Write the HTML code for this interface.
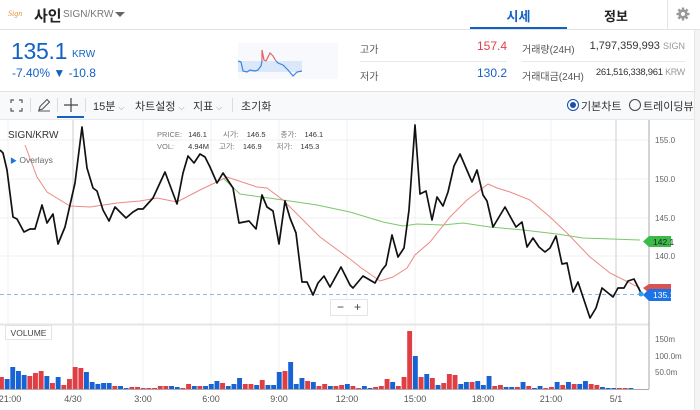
<!DOCTYPE html>
<html><head><meta charset="utf-8">
<style>
*{margin:0;padding:0;box-sizing:border-box}
body{width:700px;height:410px;overflow:hidden;background:#fff;font-family:"Liberation Sans","Noto Sans CJK KR",sans-serif;color:#333;position:relative}
.a{position:absolute;white-space:nowrap}
</style></head><body>
<!-- header -->
<div class="a" style="left:8px;top:9px;font:italic 8px 'Liberation Serif',serif;color:#e89040">Sign</div>
<div class="a" style="left:34px;top:5px;font-size:15px;font-weight:bold;color:#222">사인</div>
<div class="a" style="left:63px;top:9px;font-size:10px;color:#777">SIGN/KRW</div>
<div class="a" style="left:115px;top:12px;width:0;height:0;border-left:5px solid transparent;border-right:5px solid transparent;border-top:5px solid #666"></div>
<div class="a" style="left:470px;top:6px;width:97px;text-align:center;font-size:13px;font-weight:bold;color:#1261c4">시세</div>
<div class="a" style="left:470px;top:27px;width:97px;height:2px;background:#1261c4"></div>
<div class="a" style="left:567px;top:6px;width:98px;text-align:center;font-size:13px;font-weight:bold;color:#222">정보</div>
<div class="a" style="left:667px;top:0;width:1px;height:29px;background:#e5e5e5"></div>
<svg class="a" style="left:676px;top:7px" width="14" height="14" viewBox="0 0 14 14"><g fill="#999"><circle cx="7" cy="7" r="4.6"/><rect x="5.8" y="0.5" width="2.4" height="13"/><rect x="0.5" y="5.8" width="13" height="2.4"/><rect x="5.8" y="0.5" width="2.4" height="13" transform="rotate(45 7 7)"/><rect x="5.8" y="0.5" width="2.4" height="13" transform="rotate(-45 7 7)"/></g><circle cx="7" cy="7" r="2" fill="#fff"/></svg>
<div class="a" style="left:0;top:29px;width:700px;height:1px;background:#e2e2e2"></div>
<!-- price -->
<div class="a" style="left:11px;top:38px;font-size:23px;color:#1261c4;letter-spacing:-0.3px">135.1</div>
<div class="a" style="left:72px;top:49px;font-size:10px;color:#1261c4">KRW</div>
<div class="a" style="left:12px;top:66px;font-size:12px;color:#1261c4">-7.40% ▼ -10.8</div>
<svg class="a" style="left:238px;top:43px" width="100" height="36"><rect width="100" height="36" fill="#f7f9fd"/><rect x="0" y="18" width="64" height="11" fill="#dbe8f9"/>
<polyline fill="none" stroke="#3c82e6" stroke-width="1.2" points="0,18 3,19 5,28 9,29 12,27 17,28 20,27 23,23 24,18"/>
<polyline fill="none" stroke="#e86060" stroke-width="1.2" points="24,18 24,7 26,17 28,18 32,10 35,13 38,18"/>
<polyline fill="none" stroke="#3c82e6" stroke-width="1.2" points="38,18 40,20 45,22 50,27 55,33 59,29 64,28"/></svg>
<div class="a" style="left:360px;top:41px;font-size:10px;color:#555">고가</div>
<div class="a" style="left:420px;top:39px;width:87px;text-align:right;font-size:12px;color:#e0404a">157.4</div>
<div class="a" style="left:360px;top:61px;width:147px;height:1px;background:#e8e8e8"></div>
<div class="a" style="left:360px;top:68px;font-size:10px;color:#555">저가</div>
<div class="a" style="left:420px;top:66px;width:87px;text-align:right;font-size:12px;color:#1261c4">130.2</div>
<div class="a" style="left:522px;top:41px;font-size:10px;color:#555">거래량(24H)</div>
<div class="a" style="left:560px;top:40px;width:125px;text-align:right;font-size:11px;color:#333">1,797,359,993 <span style="font-size:9px;color:#999">SIGN</span></div>
<div class="a" style="left:522px;top:61px;width:163px;height:1px;background:#e8e8e8"></div>
<div class="a" style="left:522px;top:68px;font-size:10px;color:#555">거래대금(24H)</div>
<div class="a" style="left:560px;top:67px;width:125px;text-align:right;font-size:9.5px;color:#333;letter-spacing:-0.3px">261,516,338,961 <span style="font-size:9px;color:#999">KRW</span></div>
<!-- toolbar -->
<div class="a" style="left:0;top:91px;width:700px;height:29px;background:#f8f9fb;border-top:1px solid #e2e2e2;border-bottom:1px solid #e8e8e8"></div>
<svg class="a" style="left:10px;top:99px" width="13" height="13" fill="none" stroke="#555" stroke-width="1.2"><path d="M1 4V1H4M9 1H12V4M12 9V12H9M4 12H1V9"/></svg>
<div class="a" style="left:30px;top:98px;width:1px;height:14px;background:#ddd"></div>
<svg class="a" style="left:37px;top:98px" width="14" height="14" fill="none" stroke="#555" stroke-width="1.1"><path d="M2 12L3 8.5L10 1.5L12.5 4L5.5 11Z M1 13H13"/></svg>
<div class="a" style="left:57px;top:98px;width:1px;height:14px;background:#ddd"></div>
<svg class="a" style="left:64px;top:98px" width="14" height="14" stroke="#444" stroke-width="1.2"><path d="M7 0V14M0 7H14"/></svg>
<div class="a" style="left:57px;top:116px;width:27px;height:2px;background:#1261c4"></div>
<div class="a" style="left:85px;top:98px;width:1px;height:14px;background:#ddd"></div>
<div class="a" style="left:93px;top:98px;font-size:11px;color:#333">15분 <span style="font-size:8px;color:#999">⌵</span></div>
<div class="a" style="left:135px;top:98px;font-size:11px;color:#333">차트설정 <span style="font-size:8px;color:#999">⌵</span></div>
<div class="a" style="left:193px;top:98px;font-size:11px;color:#333">지표 <span style="font-size:8px;color:#999">⌵</span></div>
<div class="a" style="left:232px;top:98px;width:1px;height:14px;background:#ddd"></div>
<div class="a" style="left:241px;top:98px;font-size:11px;color:#333">초기화</div>
<div class="a" style="left:567px;top:99px;width:12px;height:12px;border:1.3px solid #1a4da8;border-radius:50%"></div>
<div class="a" style="left:570px;top:102px;width:6px;height:6px;background:#1a4da8;border-radius:50%"></div>
<div class="a" style="left:581px;top:98px;font-size:11px;color:#333">기본차트</div>
<div class="a" style="left:629px;top:99px;width:12px;height:12px;border:1.2px solid #444;border-radius:50%"></div>
<div class="a" style="left:643px;top:98px;font-size:11px;color:#333">트레이딩뷰</div>
<!-- chart -->
<svg class="a" style="left:0;top:0" width="700" height="410" id="ch">
<g stroke="#f0f0f0" stroke-width="1">
<path d="M0 140H649M0 179H649M0 218H649M0 256H649"/>
<path d="M8 120V389M143 120V389M211 120V389M279 120V389M347 120V389M415 120V389M483 120V389M551 120V389"/>
</g>
<path d="M73 120V389M616 120V389" stroke="#ccc"/>
<path d="M0 324.5H649" stroke="#e6e6e6" stroke-width="2"/>
<path d="M649 120V389M0 389.5H649" stroke="#aaa"/>
<g font-size="8" fill="#666" font-family="Liberation Sans,sans-serif">
<text x="655" y="143">155.0</text><text x="655" y="182">150.0</text><text x="655" y="221">145.0</text><text x="655" y="259">140.0</text>
<text x="655" y="342">150m</text><text x="655" y="359">100.0m</text><text x="655" y="375">50.0m</text>
</g>
<g font-size="9" fill="#555" font-family="Liberation Sans,sans-serif" text-anchor="middle">
<text x="10" y="402">21:00</text><text x="73" y="402">4/30</text><text x="143" y="402">3:00</text><text x="211" y="402">6:00</text><text x="279" y="402">9:00</text><text x="347" y="402">12:00</text><text x="415" y="402">15:00</text><text x="483" y="402">18:00</text><text x="551" y="402">21:00</text><text x="616" y="402">5/1</text>
</g>
<polyline fill="none" stroke="#7cc86c" stroke-width="1" points="223,178 240,194 283,200 317,205 350,212 383,222 403,226 417,224 443,225 463,223 490,227 523,230 557,234 583,238 640,240"/>
<polyline fill="none" stroke="#ec8a84" stroke-width="1" points="25,145 37,177 47,192 70,206 90,207 117,203 140,201 157,198 177,202 200,190 227,177 257,187 267,188 283,200 300,217 320,237 350,259 360,267 380,281 393,277 407,268 415,255 430,242 450,217 467,200 488,184 497,188 510,192 530,200 550,217 567,233 590,257 610,273 630,283 640,288"/>
<path d="M0 294.5H643" stroke="#8bb8f0" stroke-dasharray="4,3"/>
<polyline fill="none" stroke="#111" stroke-width="1.7" stroke-linejoin="round" points="0,150 3,153 7,170 13,217 17,219 24,232 30,229 35,229 42,205 47,223 53,214 58,244 65,227 75,183 82,127 87,168 93,188 97,191 103,210 109,221 115,207 126,218 133,212 138,209 143,209 153,198 165,172 177,204 183,173 188,156 194,163 200,154 205,157 210,167 217,183 223,173 233,188 239,223 249,221 256,229 262,195 267,207 273,211 279,244 285,201 290,218 296,233 302,282 307,282 313,295 318,283 324,276 330,287 341,267 350,285 353,288 363,276 375,283 382,270 386,265 392,235 398,257 404,248 409,210 415,125 420,194 426,191 432,220 437,197 443,206 448,192 454,166 460,154 466,168 472,182 477,170 483,195 487,201 493,227 505,207 516,227 522,222 527,247 533,238 539,247 545,252 550,248 556,236 562,264 567,263 573,292 578,282 590,318 596,308 602,288 613,297 618,288 624,288 628,281 634,279 641,293"/>
<circle cx="641" cy="294" r="2.5" fill="#2a9df4"/>
<path d="M649 236H671V247H649L643 241.5Z" fill="#3dbb4a"/>
<text x="653" y="245" font-size="8.5" fill="#222" font-family="Liberation Sans,sans-serif">142.1</text>
<path d="M649 284H671V293H649L643 288Z" fill="#d9534f"/>
<path d="M649 289H671V301H649L643 295Z" fill="#1a73e8"/>
<text x="653" y="298" font-size="8.5" fill="#fff" font-family="Liberation Sans,sans-serif">135.1</text>
<g id="vb"></g>
</svg>
<div class="a" style="left:8px;top:130px;font-size:10px;color:#333">SIGN/KRW</div>
<div class="a" style="left:157px;top:129px;font-size:7.5px;color:#777;line-height:12px">PRICE: <span style="color:#333;margin-left:4px">146.1</span><span style="margin-left:16px">시가:</span><span style="color:#333;margin-left:8px">146.5</span><span style="margin-left:15px">종가:</span><span style="color:#333;margin-left:8px">146.1</span><br>VOL:<span style="color:#333;margin-left:14px">4.94M</span><span style="margin-left:10px">고가:</span><span style="color:#333;margin-left:8px">146.9</span><span style="margin-left:15px">저가:</span><span style="color:#333;margin-left:8px">145.3</span></div>
<div class="a" style="left:10px;top:155px;font-size:8.5px;color:#666"><span style="color:#1a73e8;font-size:7px">▶</span> Overlays</div>
<div class="a" style="left:330px;top:299px;width:38px;height:17px;background:#fff;border:1px solid #e4e4e4;font-size:12px;color:#444;line-height:15px"><span style="position:absolute;left:6px">−</span><span style="position:absolute;left:23px">+</span></div>
<div class="a" style="left:5px;top:325px;width:47px;height:15px;background:#fff;border:1px solid #e4e4e4;font-size:8.5px;color:#444;text-align:center;line-height:14px">VOLUME</div>
<div class="a" style="left:694px;top:30px;width:6px;height:380px;background:#f4f4f4;border-left:1px solid #e6e6e6"></div>
<script>
var d="r12 b10 b22 b18 b14 r13 r16 r18 b13 r6 b12 r4 r10 r22 r21 b17 b7 b5 b6 b6 r3 b3 b1 r2 r2 r1 r1 r1 r3 r3 b3 b2 r1 r5 b3 r3 b3 b5 b8 r6 b3 b5 b11 r5 r5 b4 r9 b4 b4 b17 r18 b27 b5 b11 r8 b7 r3 r5 b3 r3 r4 b5 r3 r1 b3 b1 r2 r3 r10 b7 r3 r12 r58 b33 r12 b15 r11 b4 r6 r15 r14 b5 b7 r7 b8 b4 b13 r3 r4 b2 b2 r2 b7 r3 b1 b3 r1 r2 b7 r4 b7 r5 b5 b8 r5 r4 b2 b1 b1 r1 r1 b1".split(" ");
var g=document.getElementById("vb"),s="";
for(var i=0;i<d.length;i++){var h=+d[i].slice(1),x=i*5.67-1;s+='<rect x="'+x.toFixed(1)+'" y="'+(389-h)+'" width="4.9" height="'+h+'" fill="'+(d[i][0]=="r"?"#e03e45":"#1763d6")+'"/>';}
g.innerHTML=s;
</script>
</body></html>
